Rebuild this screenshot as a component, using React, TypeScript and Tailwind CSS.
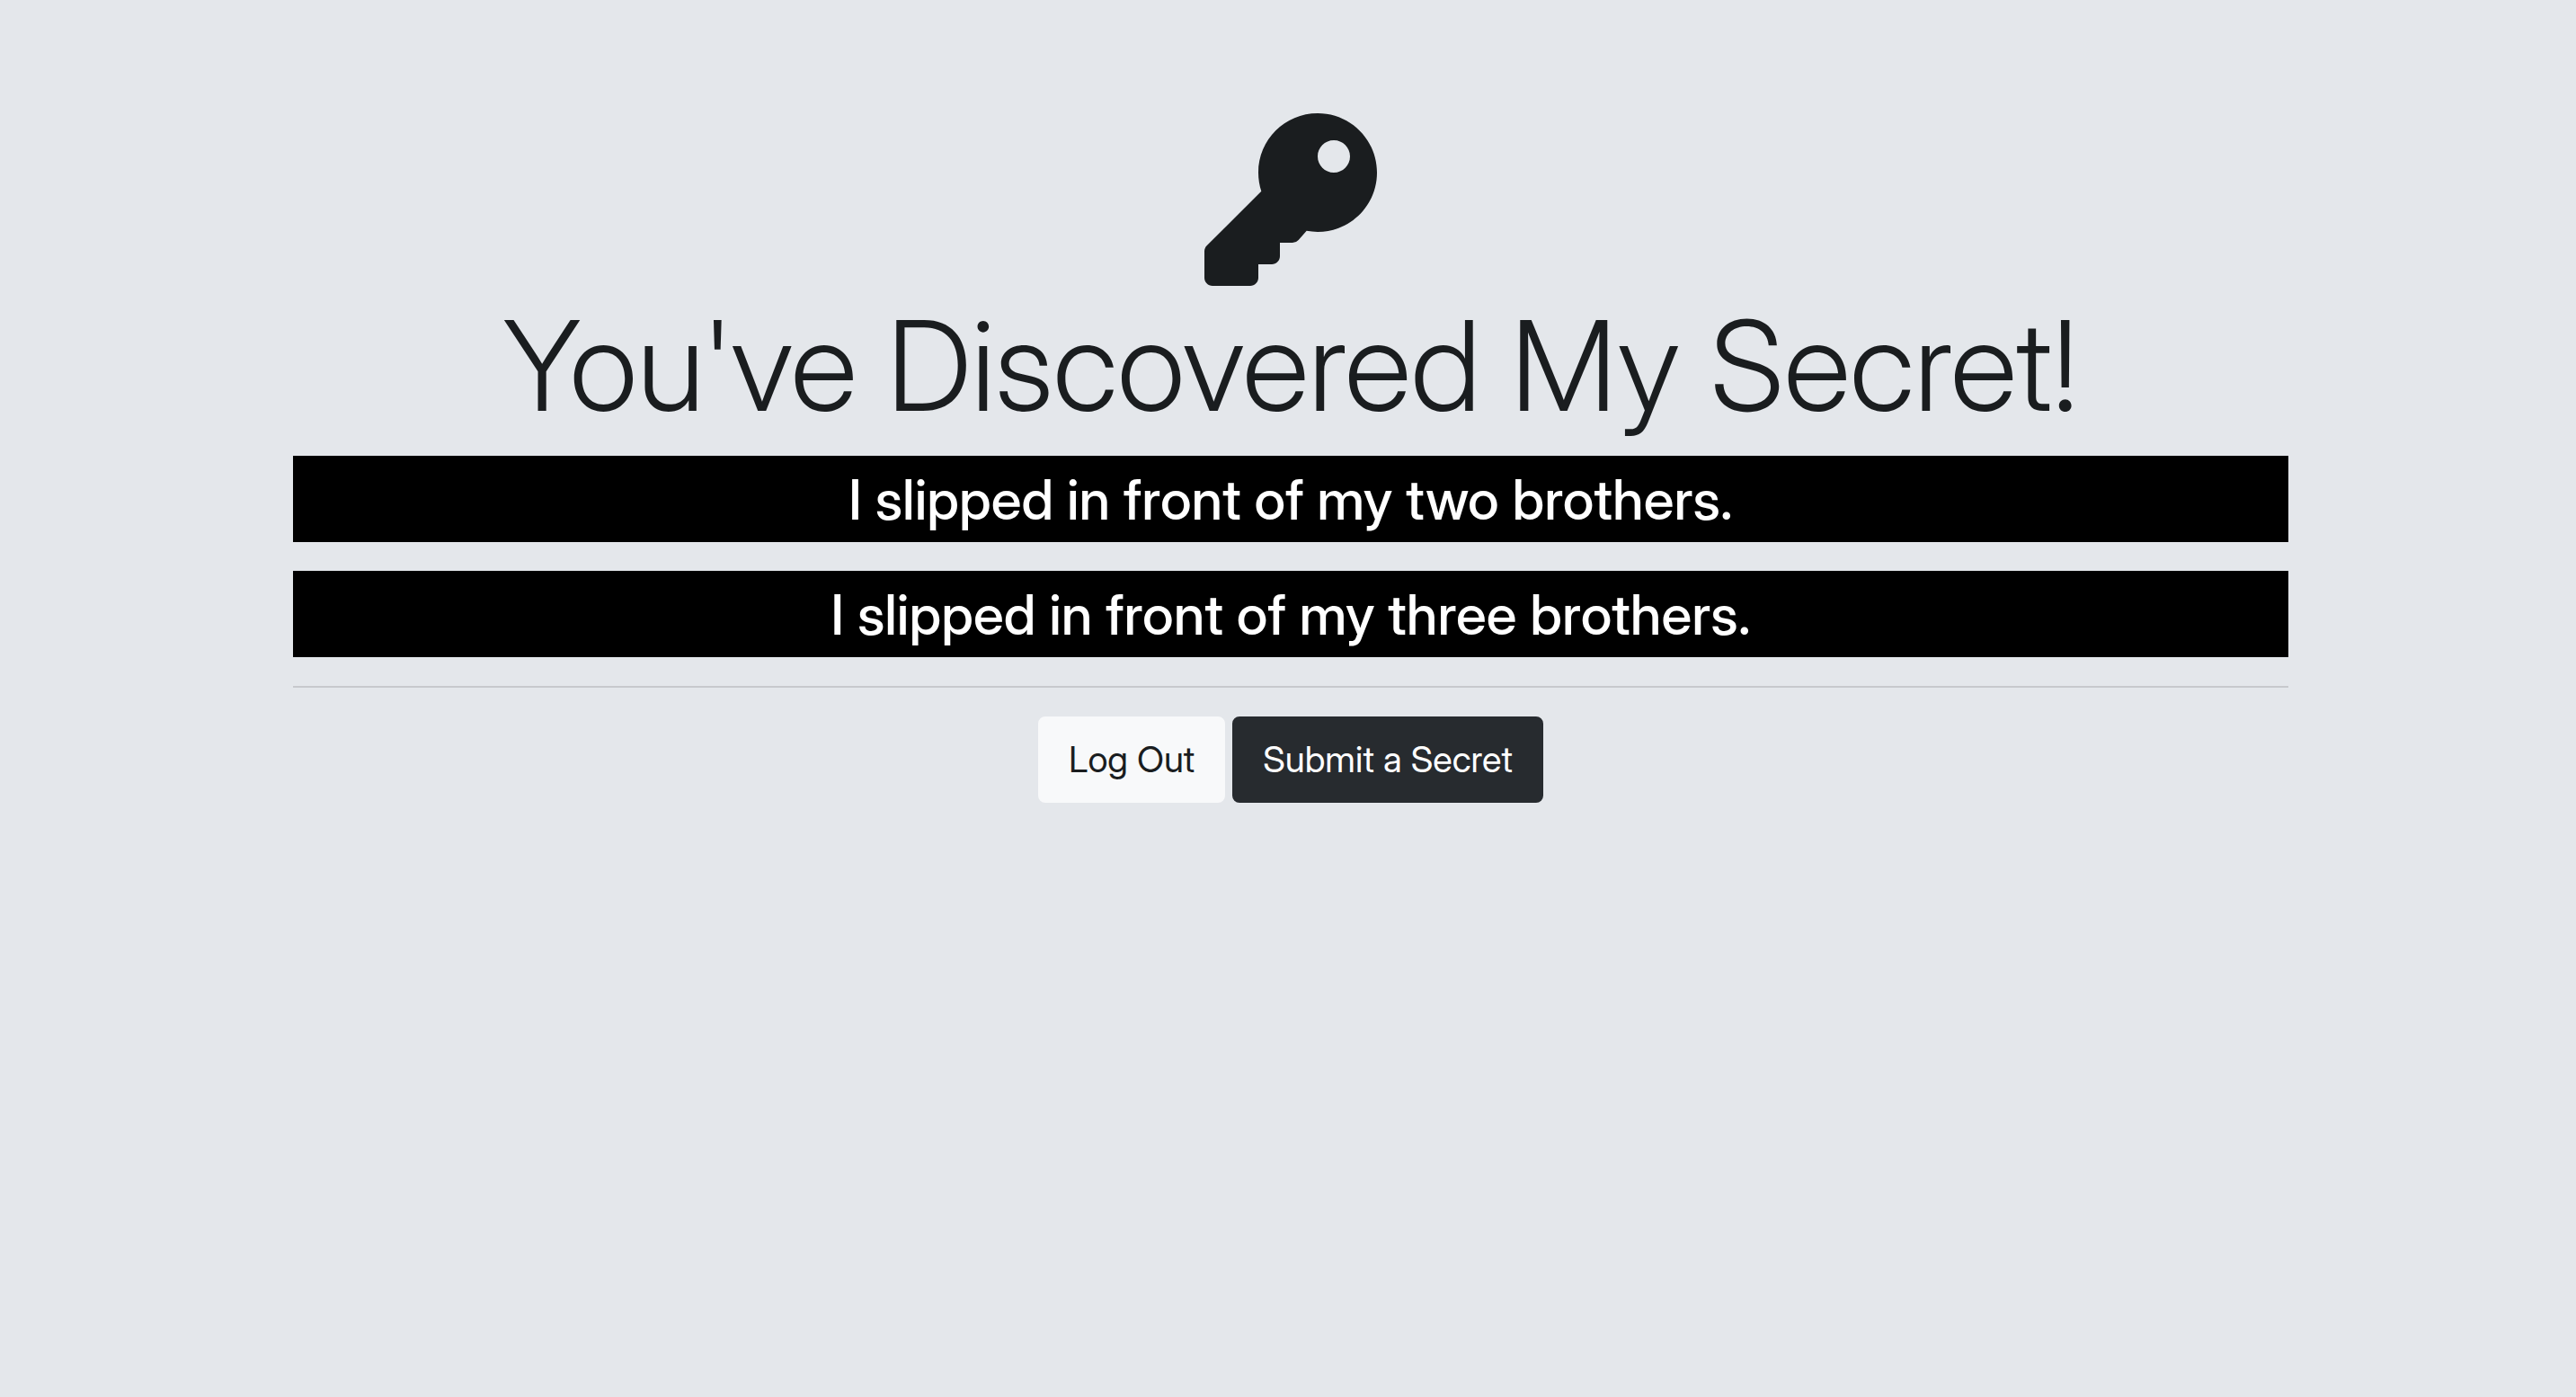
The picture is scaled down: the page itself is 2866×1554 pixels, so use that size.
import { FaKey } from "react-icons/fa";

const secrets = [
  "I slipped in front of my two brothers.",
  "I slipped in front of my three brothers.",
];

export default function App() {
  return (
    <div className="min-h-screen bg-[#e4e7eb] pl-1.5 font-['Inter_Display','Inter',sans-serif] text-[#1a1d1f]">
      <main className="mx-auto flex w-full max-w-[2220px] flex-col items-center pt-[126px] text-center">
        <FaKey className="size-48" aria-hidden="true" />
        <h1 className="mt-[5px] mb-4 text-[139px] leading-[168px] font-light">You've Discovered My Secret!</h1>
        <div className="flex w-full flex-col gap-8">
          {secrets.map((secret) => (
            <p key={secret} className="bg-black pt-[9px] pb-[7px] text-[62px] leading-[80px] font-medium text-white">
              {secret}
            </p>
          ))}
        </div>
        <hr className="my-8 w-full border-t-2 border-[#c7c9cd]" />
        <div className="flex gap-2">
          <a href="#logout" className="rounded-lg border-2 border-[#f8f9fa] bg-[#f8f9fa] px-8 py-3.5 text-[40px] leading-[64px]">
            Log Out
          </a>
          <a href="#submit" className="rounded-lg border-2 border-[#272b2f] bg-[#272b2f] px-8 py-3.5 text-[40px] leading-[64px] text-white">
            Submit a Secret
          </a>
        </div>
      </main>
    </div>
  );
}
